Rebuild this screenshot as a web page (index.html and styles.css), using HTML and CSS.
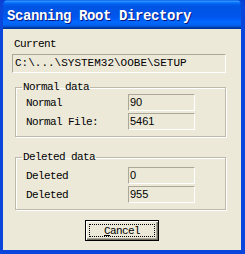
FILE: index.html
```html
<!DOCTYPE html>
<html>
<head>
<meta charset="utf-8">
<link rel="stylesheet" href="styles.css">
</head>
<body>
<div class="window">
  <div class="titlebar"><span class="title">Scanning Root Directory</span></div>
  <div class="client">
    <div class="label">Current</div>
    <div class="path">C:\...\SYSTEM32\OOBE\SETUP</div>
    <fieldset class="group group-normal">
      <legend>Normal data</legend>
      <div class="row"><span class="lbl">Normal</span><span class="val">90</span></div>
      <div class="row"><span class="lbl">Normal File:</span><span class="val">5461</span></div>
    </fieldset>
    <fieldset class="group group-deleted">
      <legend>Deleted data</legend>
      <div class="row"><span class="lbl">Deleted</span><span class="val">0</span></div>
      <div class="row"><span class="lbl">Deleted</span><span class="val">955</span></div>
    </fieldset>
    <div class="buttons">
      <button class="btn"><span class="focus"><u>C</u>ancel</span></button>
    </div>
  </div>
</div>
</body>
</html>
```
FILE: styles.css
```css
html, body {
  margin: 0;
  padding: 0;
  background: #0a3fd0;
}
.window {
  width: 245px;
  height: 254px;
  box-sizing: border-box;
  display: flex;
  flex-direction: column;
  background: #0843d8;
  border-left: 3px solid #0a46dc;
  border-right: 4px solid #0a46dc;
  border-bottom: 4px solid #0a46dc;
  box-shadow: inset -1px -1px 0 #001ea0;
  border-radius: 7px 7px 0 0;
  overflow: hidden;
  font-family: "Liberation Mono", monospace;
  font-size: 11px;
  letter-spacing: -0.6px;
  color: #000;
}
.titlebar {
  height: 29px;
  margin-left: -3px;
  margin-right: -4px;
  flex: none;
  background: linear-gradient(to bottom,
    #0058ee 0%, #3593ff 4%, #288eff 6%, #127dff 8%, #036ffc 10%,
    #0262ee 14%, #0057e5 20%, #0054e3 24%, #0055eb 56%, #005bf5 66%,
    #026afe 76%, #0062ef 86%, #0052d6 92%, #0040ab 94%, #003092 100%);
  display: flex;
  align-items: center;
  padding-left: 7px;
  padding-top: 2px;
  box-sizing: border-box;
}
.title {
  color: #fff;
  font-family: "Liberation Mono", monospace;
  font-weight: bold;
  font-size: 14px;
  letter-spacing: -0.4px;
  text-shadow: 1px 1px 0 #0a1883;
}
.client {
  flex: 1;
  background: #ece9d8;
  padding: 9px 15px 0 9px;
  display: flex;
  flex-direction: column;
}
.label {
  height: 12px;
  line-height: 12px;
  padding-left: 2px;
}
.path {
  margin-top: 4px;
  height: 19px;
  box-sizing: border-box;
  border: 1px solid;
  border-color: #aca899 #fff #fff #aca899;
  line-height: 17px;
  padding-left: 2px;
  font-size: 11px;
  letter-spacing: 0;
}
.group {
  margin: 8px 0 0 3px;
  padding: 0;
  border: 1px solid #bdbaab;
  box-shadow: inset 1px 1px 0 #fff, 1px 1px 0 #fff;
}
.group legend {
  padding: 0 1px;
  margin-left: -4px;
  height: 12px;
  line-height: 12px;
}
.group-normal {
  padding: 1px 0 6px 10px;
}
.group-deleted {
  margin-top: 14px;
  padding: 4px 0 6px 10px;
}
.row {
  display: flex;
  align-items: center;
  height: 17px;
}
.row + .row {
  margin-top: 2px;
}
.lbl {
  width: 102px;
}
.val {
  width: 67px;
  height: 17px;
  box-sizing: border-box;
  border: 1px solid;
  border-color: #aca899 #fff #fff #aca899;
  font-family: "Liberation Sans", sans-serif;
  font-size: 11px;
  letter-spacing: 0;
  line-height: 15px;
  padding-left: 1px;
}
.buttons {
  display: flex;
  justify-content: center;
  margin-top: 10px;
  padding-left: 6px;
}
.btn {
  width: 74px;
  height: 21px;
  padding: 0;
  margin: 0;
  border: 1px solid #000;
  background: #ece9d8;
  box-shadow: inset 1px 1px 0 #fff, inset -1px -1px 0 #716f64, inset -2px -2px 0 #aca899;
  font-family: "Liberation Mono", monospace;
  font-size: 11px;
  letter-spacing: -0.6px;
  color: #000;
  display: flex;
  align-items: stretch;
}
.focus {
  flex: 1;
  margin: 3px;
  border: 1px dotted #000;
  display: flex;
  align-items: center;
  justify-content: center;
}
```
